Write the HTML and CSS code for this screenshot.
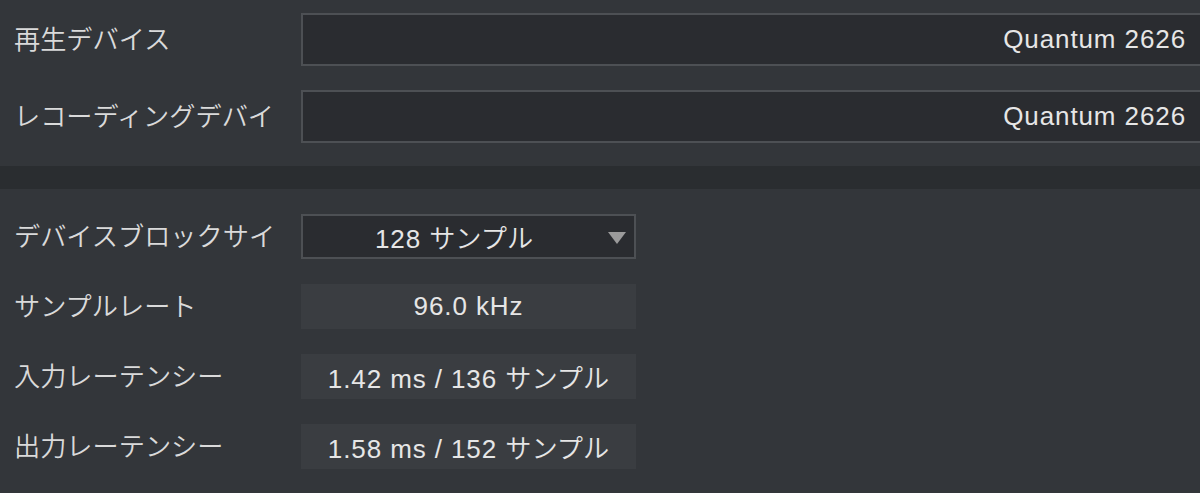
FILE: index.html
```html
<!DOCTYPE html>
<html lang="ja">
<head>
<meta charset="utf-8">
<title>Audio Device</title>
<link rel="stylesheet" href="styles.css">
</head>
<body>
<section class="devices">
  <div class="row row-device">
    <div class="label">再生デバイス</div>
    <div class="device-box"><span class="latin">Quantum 2626</span></div>
  </div>
  <div class="row row-device">
    <div class="label">レコーディングデバイ</div>
    <div class="device-box"><span class="latin">Quantum 2626</span></div>
  </div>
</section>
<div class="divider"></div>
<section class="settings">
  <div class="row row-setting">
    <div class="label">デバイスブロックサイ</div>
    <div class="dropdown">
      <span class="dropdown-value"><span class="latin">128 </span><span class="kana">サンプル</span></span>
      <span class="arrow"></span>
    </div>
  </div>
  <div class="row row-setting">
    <div class="label">サンプルレート</div>
    <div class="readout"><span class="text"><span class="latin">96.0 kHz</span></span></div>
  </div>
  <div class="row row-setting">
    <div class="label">入力レーテンシー</div>
    <div class="readout"><span class="text"><span class="latin">1.42 ms / 136 </span><span class="kana">サンプル</span></span></div>
  </div>
  <div class="row row-setting">
    <div class="label">出力レーテンシー</div>
    <div class="readout"><span class="text"><span class="latin">1.58 ms / 152 </span><span class="kana">サンプル</span></span></div>
  </div>
</section>
</body>
</html>
```
FILE: styles.css
```css
html, body {
  margin: 0;
  padding: 0;
}
body {
  width: 1200px;
  height: 493px;
  overflow: hidden;
  background: #33363a;
  font-family: "Liberation Sans", "Noto Sans CJK JP", sans-serif;
  color: #dcdcdc;
}
.devices {
  display: flex;
  flex-direction: column;
  gap: 24px;
  padding: 13px 0 23px;
}
.row {
  display: grid;
  grid-template-columns: 301px 1fr;
  align-items: center;
}
.label {
  padding-left: 14px;
  font-size: 26.2px;
  font-weight: 350;
  line-height: 1;
  color: #dadada;
  white-space: nowrap;
  padding-top: 1px;
}
.latin {
  letter-spacing: 0.9px;
}
.kana {
  font-weight: 350;
  font-size: 26.2px;
}
.device-box {
  height: 53px;
  box-sizing: border-box;
  border: 2px solid #4d5054;
  border-right: none;
  background: #2a2c30;
  display: flex;
  align-items: center;
  justify-content: flex-end;
  padding-right: 14px;
  font-size: 26px;
  color: #e6e6e6;
}
.divider {
  height: 23px;
  background: #2a2d30;
}
.settings {
  display: flex;
  flex-direction: column;
  gap: 25px;
  padding-top: 25px;
}
.row-setting {
  grid-template-columns: 301px 335px;
}
.dropdown {
  height: 45px;
  box-sizing: border-box;
  border: 2px solid #4d5054;
  background: #2a2c30;
  display: flex;
  align-items: center;
  padding-right: 8px;
  font-size: 26px;
  color: #e6e6e6;
}
.dropdown-value {
  flex: 1;
  text-align: center;
  white-space: nowrap;
}
.arrow {
  width: 0;
  height: 0;
  margin-left: 3px;
  margin-top: 2px;
  border-left: 9px solid transparent;
  border-right: 9px solid transparent;
  border-top: 12px solid #9b9b9b;
}
.readout {
  height: 45px;
  box-sizing: border-box;
  background: #3a3d41;
  display: flex;
  align-items: center;
  justify-content: center;
  font-size: 26px;
  color: #e6e6e6;
  white-space: nowrap;
}
.text {
  white-space: pre;
}
```
